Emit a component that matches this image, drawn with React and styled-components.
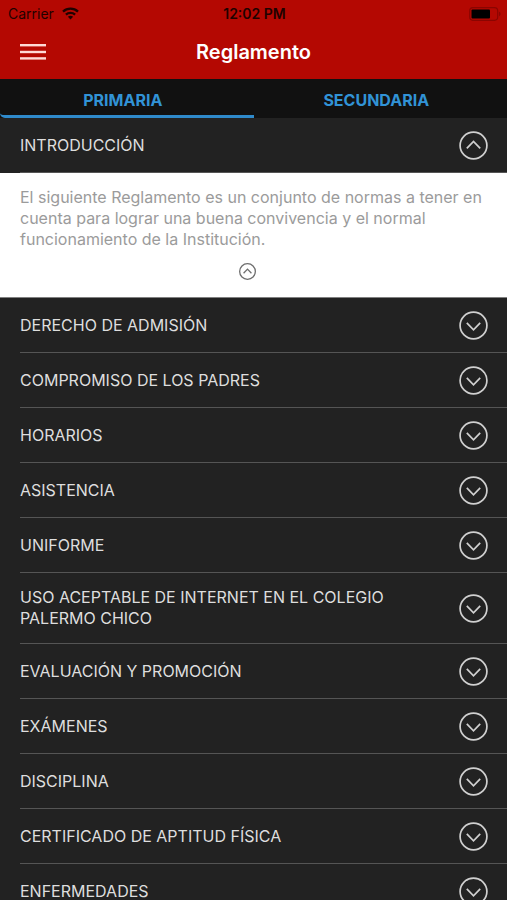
import React, { useState } from "react";
import styled, { createGlobalStyle } from "styled-components";

const GlobalStyle = createGlobalStyle`
  * {
    box-sizing: border-box;
  }
  body {
    margin: 0;
    background: #222222;
    font-family: Inter, "Liberation Sans", sans-serif;
  }
  button {
    font-family: inherit;
    border: none;
    padding: 0;
    cursor: pointer;
  }
`;

const Screen = styled.main`
  display: flex;
  flex-direction: column;
  width: 100%;
  height: 100vh;
  overflow: hidden;
`;

const Header = styled.header`
  flex: none;
  background: #b40802;
`;

const StatusBar = styled.div`
  display: grid;
  grid-template-columns: 1fr auto 1fr;
  align-items: center;
  height: 27px;
  padding: 0 6px 0 8px;
  color: #1f0200;
  font-size: 14px;
`;

const Carrier = styled.span`
  display: flex;
  align-items: center;
  gap: 8px;
`;

const Clock = styled.span`
  font-weight: 600;
`;

const BatteryIcon = styled.svg`
  justify-self: end;
`;

const NavBar = styled.div`
  display: grid;
  grid-template-columns: 1fr auto 1fr;
  align-items: center;
  height: 52px;
  padding: 0 20px 2px;
`;

const MenuButton = styled.button`
  display: flex;
  width: 26px;
  background: none;
`;

const Title = styled.h1`
  margin: 0;
  color: #ffffff;
  font-size: 20px;
  font-weight: 600;
  line-height: 24px;
`;

const Tabs = styled.div`
  flex: none;
  display: flex;
  background: #111111;
`;

const Tab = styled.button`
  flex: 1;
  height: 39px;
  padding: 6px 8px 0 0;
  background: none;
  color: #3193d6;
  font-size: 16px;
  font-weight: 700;
  border-bottom: 3px solid ${(props) => (props.$active ? "#2f8acb" : "transparent")};
  border-bottom-left-radius: 5px;
`;

const List = styled.div`
  flex: 1;
  min-height: 0;
  overflow-y: auto;
  scrollbar-width: none;
`;

const Row = styled.button`
  display: block;
  width: 100%;
  padding-left: 20px;
  background: #222222;
  text-align: left;
`;

const RowContent = styled.span`
  display: flex;
  align-items: center;
  justify-content: space-between;
  min-height: 55px;
  padding-right: 19px;
  border-bottom: 1px solid #555555;
`;

const RowTitle = styled.span`
  max-width: 380px;
  padding: 14px 0;
  color: #dedede;
  font-size: 16px;
  line-height: 21px;
`;

const Panel = styled.div`
  display: flex;
  flex-direction: column;
  align-items: center;
  padding: 14px 20px 17px;
  background: #ffffff;
  border-bottom: 1px solid #808080;
`;

const Paragraph = styled.p`
  width: 100%;
  margin: 0 0 13px;
  color: #9b9b9b;
  font-size: 16px;
  line-height: 21px;
`;

const CloseButton = styled.button`
  display: flex;
  margin-right: 12px;
  background: none;
`;

const sections = [
  {
    title: "INTRODUCCIÓN",
    text: "El siguiente Reglamento es un conjunto de normas a tener en cuenta para lograr una buena convivencia y el normal funcionamiento de la Institución.",
  },
  { title: "DERECHO DE ADMISIÓN" },
  { title: "COMPROMISO DE LOS PADRES" },
  { title: "HORARIOS" },
  { title: "ASISTENCIA" },
  { title: "UNIFORME" },
  { title: "USO ACEPTABLE DE INTERNET EN EL COLEGIO PALERMO CHICO" },
  { title: "EVALUACIÓN Y PROMOCIÓN" },
  { title: "EXÁMENES" },
  { title: "DISCIPLINA" },
  { title: "CERTIFICADO DE APTITUD FÍSICA" },
  { title: "ENFERMEDADES" },
];

function CircleArrow({ up, size, color, stroke }) {
  return (
    <svg
      width={size}
      height={size}
      viewBox="0 0 29 29"
      fill="none"
      stroke={color}
      strokeWidth={stroke}
      aria-hidden="true"
    >
      <circle cx="14.5" cy="14.5" r="13.4" />
      <path
        d={up ? "M7.8 17.4L14.5 10.4L21.2 17.4" : "M7.8 11.8L14.5 18.8L21.2 11.8"}
      />
    </svg>
  );
}

function WifiIcon() {
  return (
    <svg width="17" height="13" viewBox="0 0 17 13" aria-hidden="true">
      <g fill="none" stroke="#1f0200" strokeWidth="2.3">
        <path d="M1 4.7C5.2 0.7 11.8 0.7 16 4.7" />
        <path d="M3.9 7.7C6.5 5.3 10.5 5.3 13.1 7.7" />
      </g>
      <path d="M8.5 12.4L5.9 9.7C7.4 8.4 9.6 8.4 11.1 9.7Z" fill="#1f0200" />
    </svg>
  );
}

function App() {
  const [tab, setTab] = useState("PRIMARIA");
  const [open, setOpen] = useState("INTRODUCCIÓN");

  const toggle = (title) => setOpen(open === title ? null : title);

  return (
    <Screen>
      <GlobalStyle />
      <Header>
        <StatusBar>
          <Carrier>
            Carrier
            <WifiIcon />
          </Carrier>
          <Clock>12:02 PM</Clock>
          <BatteryIcon width="32" height="14" viewBox="0 0 32 14" aria-hidden="true">
            <rect x="0.7" y="0.7" width="28" height="12.6" rx="3.2" fill="none" stroke="#8a0501" strokeWidth="1.2" />
            <rect x="2.5" y="2.5" width="18.5" height="9" rx="1" fill="#000000" />
            <path d="M30 4.8C32 5.4 32 8.6 30 9.2Z" fill="#8a0501" />
          </BatteryIcon>
        </StatusBar>
        <NavBar>
          <MenuButton aria-label="Menú">
            <svg width="26" height="16" viewBox="0 0 26 16" fill="#ffd9d6">
              <rect y="0" width="26" height="2.4" />
              <rect y="6.8" width="26" height="2.4" />
              <rect y="13.2" width="26" height="2.4" />
            </svg>
          </MenuButton>
          <Title>Reglamento</Title>
        </NavBar>
      </Header>
      <Tabs role="tablist">
        {["PRIMARIA", "SECUNDARIA"].map((name) => (
          <Tab
            key={name}
            role="tab"
            aria-selected={tab === name}
            $active={tab === name}
            onClick={() => setTab(name)}
          >
            {name}
          </Tab>
        ))}
      </Tabs>
      <List>
        {sections.map(({ title, text }) => (
          <React.Fragment key={title}>
            <Row aria-expanded={open === title} onClick={() => toggle(title)}>
              <RowContent>
                <RowTitle>{title}</RowTitle>
                <CircleArrow up={open === title} size={29} color="#d0d0d0" stroke={1.7} />
              </RowContent>
            </Row>
            {open === title && text && (
              <Panel>
                <Paragraph>{text}</Paragraph>
                <CloseButton aria-label="Cerrar" onClick={() => setOpen(null)}>
                  <CircleArrow up size={17} color="#6e6e6e" stroke={2.2} />
                </CloseButton>
              </Panel>
            )}
          </React.Fragment>
        ))}
      </List>
    </Screen>
  );
}

export default App;
